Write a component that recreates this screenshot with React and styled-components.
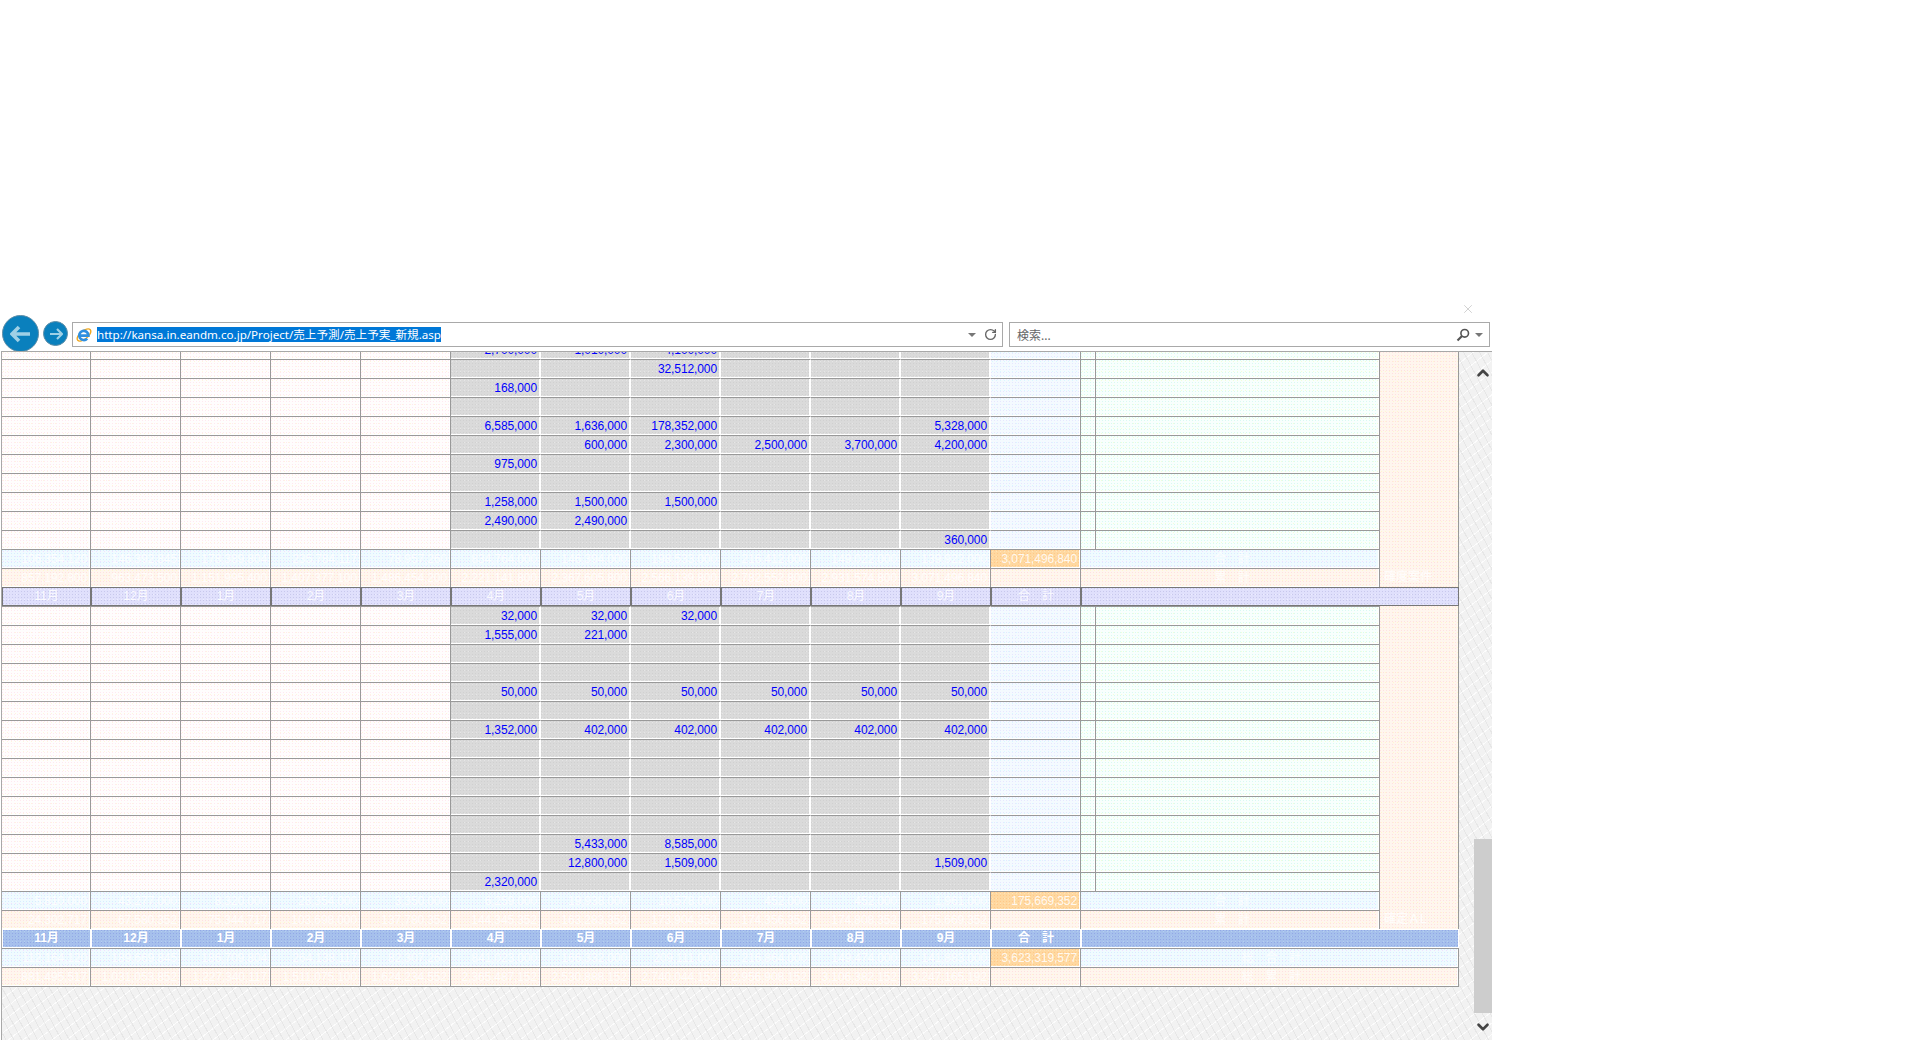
import styled, { createGlobalStyle } from 'styled-components';
import { ChevronUp, ChevronDown, RotateCw, X } from 'lucide-react';

const GlobalStyle = createGlobalStyle`
  html, body {
    margin: 0;
    padding: 0;
    background: #fff;
    font-family: "Liberation Sans", "Noto Sans CJK JP", sans-serif;
  }
`;

// dithered fills, the old page used small tiled gifs for these
const dots = (base, a, b) => `
  radial-gradient(circle at 0.5px 0.5px, ${a} 0.7px, transparent 0.8px) 0 0 / 3px 3px,
  radial-gradient(circle at 0.5px 0.5px, ${b} 0.7px, transparent 0.8px) 1px 1px / 4px 5px,
  ${base}
`;

const tones = {
  pink: dots('#fffdfd', '#ffe8f0', '#fff5de'),
  grey: dots('#dadada', '#d0d0d0', '#e6e6e6'),
  ice: dots('#f4faff', '#e6e6ff', '#daf8ff'),
  mint: dots('#f8fffd', '#d8f9f2', '#f2ffd8'),
  sub: dots('#f0fbff', '#d8ecff', '#f2e0ff'),
  peach: dots('#fff6ee', '#ffe0e0', '#fff8d0'),
  lav: dots('#e0e0fc', '#c8c8ec', '#eeeeff'),
  head: dots('#a6c0ec', '#92a8e6', '#b4d0f0'),
  orange: dots('#ffd8a0', '#ffc888', '#ffe4b8'),
};

const texture = `
  repeating-linear-gradient(62deg, transparent 0 3px, rgba(190,190,190,0.22) 3px 4px, transparent 4px 7px),
  repeating-linear-gradient(-38deg, transparent 0 4px, rgba(255,255,255,0.8) 4px 5px, transparent 5px 9px),
  #f2f2f2
`;

const Page = styled.div`
  width: 1920px;
  height: 1040px;
  overflow: hidden;
  padding-top: 315px;
  box-sizing: border-box;
`;

const Toolbar = styled.div`
  position: relative;
  display: flex;
  align-items: flex-start;
  width: 1491px;
  height: 36px;
  padding-left: 2px;
  box-sizing: border-box;
`;

const CloseIcon = styled(X)`
  position: absolute;
  left: 1461px;
  top: -13px;
  color: #cfcfcf;
`;

const RoundButton = styled.div`
  flex: none;
  display: flex;
  align-items: center;
  justify-content: center;
  width: ${(p) => p.$size}px;
  height: ${(p) => p.$size}px;
  margin-top: ${(p) => p.$top}px;
  margin-right: 4px;
  border-radius: 50%;
  background: #0a80bd;
  border: 1px solid #5f8ea8;
  box-sizing: border-box;
`;

const InputBox = styled.div`
  flex: none;
  display: flex;
  align-items: center;
  width: ${(p) => p.$width}px;
  height: 25px;
  margin-top: 7px;
  margin-left: ${(p) => p.$left}px;
  padding: 0 6px;
  border: 1px solid #a9a9a9;
  box-sizing: border-box;
  background: #fff;
`;

const LogoSlot = styled.span`
  display: flex;
  margin-left: -3px;
`;

const Selected = styled.span`
  margin-left: 5px;
  background: #0078d7;
  color: #fff;
  font: 11.6px "Noto Sans", "Noto Sans CJK JP", sans-serif;
  line-height: 15px;
  white-space: nowrap;
`;

const Placeholder = styled.span`
  margin-left: 1px;
  color: #666;
  font: 12px "Noto Sans", "Noto Sans CJK JP", sans-serif;
`;

const Push = styled.div`
  flex: 1;
`;

const Caret = styled.span`
  width: 0;
  height: 0;
  margin-left: ${(p) => p.$left || 0}px;
  margin-right: ${(p) => p.$right || 0}px;
  border-left: 4px solid transparent;
  border-right: 4px solid transparent;
  border-top: 4px solid #777;
`;

const RefreshIcon = styled(RotateCw)`
  color: #666;
  margin-right: -1px;
`;

const Panel = styled.div`
  position: relative;
  display: flex;
  width: 1491px;
  height: 689px;
  margin-left: 1px;
  box-sizing: border-box;
  border-top: 1px solid #a8a8a8;
  border-left: 1px solid #a8a8a8;
  background: ${texture};
`;

const TablePane = styled.div`
  flex: none;
  width: 1457px;
  height: 100%;
  overflow: hidden;
`;

const Sheet = styled.table`
  table-layout: fixed;
  width: 1457px;
  margin-top: -12px;
  border-collapse: separate;
  border-spacing: 0;
  border-bottom: 1px solid #999;
`;

const Cell = styled.td`
  height: 19px;
  padding: ${(p) => (p.$align === 'center' ? '0 0 0 4px' : '0 3px 0 0')};
  box-sizing: border-box;
  overflow: hidden;
  white-space: nowrap;
  font-size: 12px;
  line-height: 17px;
  letter-spacing: -0.1px;
  text-align: ${(p) => p.$align || 'right'};
  color: ${(p) => p.$color || '#0000ff'};
  background: ${(p) => tones[p.$tone]};
  border-top: 1px solid #999;
  border-right: 1px solid ${(p) => (p.$tone === 'grey' ? '#fff' : '#999')};
  box-shadow: inset 0 -1px #fff, inset -1px 0 #fff;
`;

const Pale = styled(Cell)`
  color: rgba(255, 255, 255, 0.85);
`;

const Side = styled.td`
  padding: 0 0 1px 4px;
  vertical-align: bottom;
  overflow: hidden;
  white-space: nowrap;
  font-size: 12px;
  line-height: 17px;
  color: rgba(255, 255, 255, 0.9);
  background: ${tones.peach};
  border-right: 1px solid #999;
`;

const Month = styled.td`
  height: 19px;
  padding: 0;
  box-sizing: border-box;
  text-align: center;
  font-size: 12px;
  line-height: 15px;
  font-weight: ${(p) => (p.$strong ? 700 : 400)};
  color: ${(p) => (p.$strong ? '#fff' : 'rgba(255,255,255,0.85)')};
  background: ${(p) => (p.$strong ? tones.head : tones.lav)};
  border: 1px solid ${(p) => (p.$strong ? '#fff' : '#777')};
`;

const Scrollbar = styled.div`
  flex: 1;
  display: flex;
  flex-direction: column;
  padding: 0 4px 0 15px;
`;

const ScrollButton = styled.div`
  flex: none;
  height: ${(p) => p.$height}px;
  display: flex;
  align-items: center;
  justify-content: center;
  color: #444;
`;

const Track = styled.div`
  flex: 1;
  display: flex;
  flex-direction: column;
  justify-content: flex-end;
`;

const Thumb = styled.div`
  height: 174px;
  background: #cdcdcd;
`;

const BackArrow = () => (
  <svg width="22" height="18" viewBox="0 0 22 18">
    <path d="M9 2 2 9l7 7M3 9h17" fill="none" stroke="#9fd0e6" strokeWidth="3.6" />
  </svg>
);

const ForwardArrow = () => (
  <svg width="14" height="12" viewBox="0 0 14 12">
    <path d="M8 1l5 5-5 5M12 6H1" fill="none" stroke="#9fd0e6" strokeWidth="2.2" />
  </svg>
);

const IeLogo = () => (
  <svg width="16" height="16" viewBox="0 0 16 16">
    <ellipse cx="8" cy="8" rx="8.2" ry="4" transform="rotate(-40 8 8)" fill="none" stroke="#f0a820" strokeWidth="1.4" />
    <path d="M3.2 8.6h9.2a4.6 4.6 0 1 0-1.2 3" fill="none" stroke="#2f8fe0" strokeWidth="2.6" />
  </svg>
);

const SearchGlass = () => (
  <svg width="14" height="14" viewBox="0 0 14 14">
    <circle cx="8.7" cy="5.3" r="3.8" fill="none" stroke="#555" strokeWidth="1.6" />
    <path d="M6 8 1.5 12.5" stroke="#555" strokeWidth="2.2" />
  </svg>
);

const months = ['11月', '12月', '1月', '2月', '3月', '4月', '5月', '6月', '7月', '8月', '9月'];

const upper = [
  ['2,700,000', '1,010,000', '4,100,000', '', '', ''],
  ['', '', '32,512,000', '', '', ''],
  ['168,000', '', '', '', '', ''],
  ['', '', '', '', '', ''],
  ['6,585,000', '1,636,000', '178,352,000', '', '', '5,328,000'],
  ['', '600,000', '2,300,000', '2,500,000', '3,700,000', '4,200,000'],
  ['975,000', '', '', '', '', ''],
  ['', '', '', '', '', ''],
  ['1,258,000', '1,500,000', '1,500,000', '', '', ''],
  ['2,490,000', '2,490,000', '', '', '', ''],
  ['', '', '', '', '', '360,000'],
];

const lower = [
  ['32,000', '32,000', '32,000', '', '', ''],
  ['1,555,000', '221,000', '', '', '', ''],
  ['', '', '', '', '', ''],
  ['', '', '', '', '', ''],
  ['50,000', '50,000', '50,000', '50,000', '50,000', '50,000'],
  ['', '', '', '', '', ''],
  ['1,352,000', '402,000', '402,000', '402,000', '402,000', '402,000'],
  ['', '', '', '', '', ''],
  ['', '', '', '', '', ''],
  ['', '', '', '', '', ''],
  ['', '', '', '', '', ''],
  ['', '', '', '', '', ''],
  ['', '5,433,000', '8,585,000', '', '', ''],
  ['', '12,800,000', '1,509,000', '', '', '1,509,000'],
  ['2,320,000', '', '', '', '', ''],
];

const DetailRows = ({ rows, sideText, subtotal, total, cumulative }) => (
  <>
    {rows.map((row, i) => (
      <tr key={i}>
        {months.slice(0, 5).map((m) => (
          <Cell key={m} $tone="pink" />
        ))}
        {row.map((v, j) => (
          <Cell key={j} $tone="grey">{v}</Cell>
        ))}
        <Cell $tone="ice" />
        <Cell $tone="mint" />
        <Cell $tone="mint" />
        {i === 0 && (
          <Side rowSpan={rows.length + 2}>{sideText}</Side>
        )}
      </tr>
    ))}
    <tr>
      {subtotal.map((v, i) => (
        <Pale key={i} $tone="sub">{v}</Pale>
      ))}
      <Pale $tone="orange">{total}</Pale>
      <Pale colSpan={2} $tone="sub" $align="center">合　計</Pale>
    </tr>
    <tr>
      {cumulative.map((v, i) => (
        <Pale key={i} $tone="peach">{v}</Pale>
      ))}
      <Pale $tone="peach" />
      <Pale colSpan={2} $tone="peach" $align="center">累　計</Pale>
    </tr>
  </>
);

const MonthRow = ({ strong }) => (
  <tr>
    {months.map((m) => (
      <Month key={m} $strong={strong}>{m}</Month>
    ))}
    <Month $strong={strong}>合　計</Month>
    <Month colSpan={3} $strong={strong} />
  </tr>
);

export default function App() {
  return (
    <Page>
      <GlobalStyle />
      <Toolbar>
        <CloseIcon size={14} strokeWidth={1.6} />
        <RoundButton $size={37} $top={0}>
          <BackArrow />
        </RoundButton>
        <RoundButton $size={25} $top={6}>
          <ForwardArrow />
        </RoundButton>
        <InputBox $width={931} $left={0}>
          <LogoSlot>
            <IeLogo />
          </LogoSlot>
          <Selected>http://kansa.in.eandm.co.jp/Project/売上予測/売上予実_新規.asp</Selected>
          <Push />
          <Caret $right={8} />
          <RefreshIcon size={13} strokeWidth={2.5} />
        </InputBox>
        <InputBox $width={481} $left={6}>
          <Placeholder>検索...</Placeholder>
          <Push />
          <SearchGlass />
          <Caret $left={5} />
        </InputBox>
      </Toolbar>
      <Panel>
        <TablePane>
          <Sheet>
            <colgroup>
              <col width="89" />
              {Array.from({ length: 11 }, (_, i) => (
                <col key={i} width="90" />
              ))}
              <col width="15" />
              <col width="284" />
              <col width="79" />
            </colgroup>
            <tbody>
              <DetailRows
                rows={upper}
                sideText="確度案件"
                total="3,071,496,840"
                subtotal={['106,354,120', '146,392,845', '178,389,804', '235,784,117', '78,957,260', '834,764,000', '146,394,000', '198,533,000', '216,412,000', '149,022,000', '139,922,000']}
                cumulative={['857,192,800', '963,473,500', '1,151,995,400', '1,407,377,100', '1,486,454,200', '2,221,141,800', '2,367,605,800', '2,566,139,800', '2,782,552,800', '2,931,574,800', '3,071,496,840']}
              />
              <MonthRow />
              <DetailRows
                rows={lower}
                sideText="確定ＡL"
                total="175,669,352"
                subtotal={['5,810,000', '43,277,000', '8,320,000', '28,354,000', '3,350,000', '6,259,000', '19,938,000', '10,578,000', '452,000', '452,000', '1,961,000']}
                cumulative={['24,302,717', '67,580,352', '75,344,717', '103,698,000', '137,780,352', '144,345,352', '163,283,352', '173,904,352', '174,356,352', '174,808,352', '175,669,352']}
              />
              <MonthRow strong />
              <tr>
                {['112,164,120', '189,669,845', '186,709,804', '264,138,117', '82,307,260', '841,023,000', '166,332,000', '209,111,000', '216,864,000', '149,474,000', '141,883,000'].map((v, i) => (
                  <Pale key={i} $tone="sub">{v}</Pale>
                ))}
                <Pale $tone="orange">3,623,319,577</Pale>
                <Pale colSpan={3} $tone="sub" $align="center">総　合　計</Pale>
              </tr>
              <tr>
                {['881,495,517', '1,031,053,852', '1,227,340,117', '1,511,075,100', '1,624,234,552', '2,365,487,152', '2,530,888,152', '2,740,044,152', '2,956,908,152', '3,106,382,152', '3,247,165,192'].map((v, i) => (
                  <Pale key={i} $tone="peach">{v}</Pale>
                ))}
                <Pale $tone="peach" />
                <Pale colSpan={3} $tone="peach" $align="center">総　累　計</Pale>
              </tr>
            </tbody>
          </Sheet>
        </TablePane>
        <Scrollbar>
          <ScrollButton $height={42}>
            <ChevronUp size={18} strokeWidth={3.5} />
          </ScrollButton>
          <Track>
            <Thumb />
          </Track>
          <ScrollButton $height={27}>
            <ChevronDown size={18} strokeWidth={3.5} />
          </ScrollButton>
        </Scrollbar>
      </Panel>
    </Page>
  );
}
